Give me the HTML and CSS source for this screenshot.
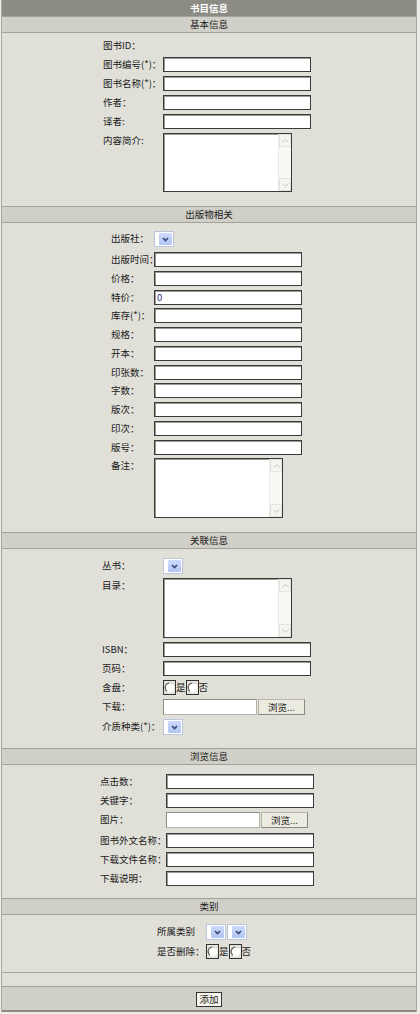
FILE: index.html
```html
<!DOCTYPE html>
<html lang="zh-CN">
<head>
    <meta charset="UTF-8">
    <title>书目信息</title>
    <link rel="stylesheet" href="styles.css">
</head>
<body>
    <div class="page">
        <div class="caption">书目信息</div>

        <!-- 基本信息 -->
        <div class="section-title">基本信息</div>
        <div class="section-body basic-body">
            <div class="form-grid basic">
                <span class="label">图书ID：</span><span></span>
                <span class="label">图书编号(*)：</span><input class="text" type="text">
                <span class="label">图书名称(*)：</span><input class="text" type="text">
                <span class="label">作者：</span><input class="text" type="text">
                <span class="label">译者:</span><input class="text" type="text">
                <span class="label">内容简介:</span>
                <div class="memo memo-short">
                    <textarea></textarea>
                    <div class="vscroll">
                        <span class="arrow"><svg width="7" height="4" viewBox="0 0 7 4"><path d="M0.5 3.5 L3.5 0.5 L6.5 3.5" fill="none" stroke="#c4c4c0" stroke-width="1"/></svg></span>
                        <span class="arrow"><svg width="7" height="4" viewBox="0 0 7 4"><path d="M0.5 0.5 L3.5 3.5 L6.5 0.5" fill="none" stroke="#c4c4c0" stroke-width="1"/></svg></span>
                    </div>
                </div>
            </div>
        </div>

        <!-- 出版物相关 -->
        <div class="section-title">出版物相关</div>
        <div class="section-body publish-body">
            <div class="form-grid publish">
                <span class="label">出版社：</span>
                <span class="cell-combo"><span class="combo"><span class="combo-btn"><svg width="7" height="5" viewBox="0 0 7 5"><path d="M1 1 L3.5 3.5 L6 1" fill="none" stroke="#34467a" stroke-width="1.6"/></svg></span></span></span>
                <span class="label">出版时间：</span><input class="text" type="text">
                <span class="label">价格：</span><input class="text" type="text">
                <span class="label">特价：</span><input class="text" type="text" value="0">
                <span class="label">库存(*)：</span><input class="text" type="text">
                <span class="label">规格：</span><input class="text" type="text">
                <span class="label">开本：</span><input class="text" type="text">
                <span class="label">印张数：</span><input class="text" type="text">
                <span class="label">字数：</span><input class="text" type="text">
                <span class="label">版次：</span><input class="text" type="text">
                <span class="label">印次：</span><input class="text" type="text">
                <span class="label">版号：</span><input class="text" type="text">
                <span class="label">备注：</span>
                <div class="memo">
                    <textarea></textarea>
                    <div class="vscroll">
                        <span class="arrow"><svg width="7" height="4" viewBox="0 0 7 4"><path d="M0.5 3.5 L3.5 0.5 L6.5 3.5" fill="none" stroke="#c4c4c0" stroke-width="1"/></svg></span>
                        <span class="arrow"><svg width="7" height="4" viewBox="0 0 7 4"><path d="M0.5 0.5 L3.5 3.5 L6.5 0.5" fill="none" stroke="#c4c4c0" stroke-width="1"/></svg></span>
                    </div>
                </div>
            </div>
        </div>

        <!-- 关联信息 -->
        <div class="section-title">关联信息</div>
        <div class="section-body related-body">
            <div class="form-grid related">
                <span class="label">丛书：</span>
                <span class="combo"><span class="combo-btn"><svg width="7" height="5" viewBox="0 0 7 5"><path d="M1 1 L3.5 3.5 L6 1" fill="none" stroke="#34467a" stroke-width="1.6"/></svg></span></span>
                <span class="label">目录：</span>
                <div class="memo">
                    <textarea></textarea>
                    <div class="vscroll">
                        <span class="arrow"><svg width="7" height="4" viewBox="0 0 7 4"><path d="M0.5 3.5 L3.5 0.5 L6.5 3.5" fill="none" stroke="#c4c4c0" stroke-width="1"/></svg></span>
                        <span class="arrow"><svg width="7" height="4" viewBox="0 0 7 4"><path d="M0.5 0.5 L3.5 3.5 L6.5 0.5" fill="none" stroke="#c4c4c0" stroke-width="1"/></svg></span>
                    </div>
                </div>
                <span class="label">ISBN：</span><input class="text" type="text">
                <span class="label">页码：</span><input class="text" type="text">
                <span class="label">含盘：</span>
                <span class="choices"><input class="radio" type="radio" name="disc"><span>是</span><input class="radio" type="radio" name="disc"><span>否</span></span>
                <span class="label">下载：</span>
                <span class="file"><input class="file-path" type="text"><button class="file-btn" type="button">浏览...</button></span>
                <span class="label">介质种类(*)：</span>
                <span class="combo"><span class="combo-btn"><svg width="7" height="5" viewBox="0 0 7 5"><path d="M1 1 L3.5 3.5 L6 1" fill="none" stroke="#34467a" stroke-width="1.6"/></svg></span></span>
            </div>
        </div>

        <!-- 浏览信息 -->
        <div class="section-title">浏览信息</div>
        <div class="section-body browse-body">
            <div class="form-grid browse">
                <span class="label">点击数：</span><input class="text" type="text">
                <span class="label">关键字：</span><input class="text" type="text">
                <span class="label">图片：</span>
                <span class="file file-row"><input class="file-path" type="text"><button class="file-btn" type="button">浏览...</button></span>
                <span class="label">图书外文名称：</span><input class="text" type="text">
                <span class="label">下载文件名称：</span><input class="text" type="text">
                <span class="label">下载说明：</span><input class="text" type="text">
            </div>
        </div>

        <!-- 类别 -->
        <div class="section-title">类别</div>
        <div class="section-body kind-body">
            <div class="form-grid kind">
                <span class="label">所属类别</span>
                <span class="combos">
                    <span class="combo"><span class="combo-btn"><svg width="7" height="5" viewBox="0 0 7 5"><path d="M1 1 L3.5 3.5 L6 1" fill="none" stroke="#34467a" stroke-width="1.6"/></svg></span></span>
                    <span class="combo"><span class="combo-btn"><svg width="7" height="5" viewBox="0 0 7 5"><path d="M1 1 L3.5 3.5 L6 1" fill="none" stroke="#34467a" stroke-width="1.6"/></svg></span></span>
                </span>
                <span class="label">是否删除：</span>
                <span class="choices"><input class="radio" type="radio" name="del"><span>是</span><input class="radio" type="radio" name="del"><span>否</span></span>
            </div>
        </div>

        <div class="spacer"></div>
        <div class="actions">
            <button class="submit" type="button">添加</button>
        </div>
    </div>
</body>
</html>
```

FILE: styles.css
```css
/* Page */
body {
    margin: 0;
    background: #ecebe5;
    font-family: "Noto Sans CJK SC", "Liberation Sans", sans-serif;
    font-size: 9.5px;
    color: #1a1a1a;
}

.page {
    width: 414px;
    margin-left: 1px;
    border-left: 1px solid #aaa9a2;
    border-right: 1px solid #aaa9a2;
    background: #e0dfd8;
}

.caption {
    height: 16px;
    line-height: 16px;
    background: #8c8b84;
    color: #fff;
    font-weight: bold;
    text-align: center;
}

.section-title {
    height: 15px;
    line-height: 15px;
    background: #d1d0c8;
    border-top: 1px solid #a2a19a;
    border-bottom: 1px solid #a2a19a;
    text-align: center;
}

/* Section bodies */
.basic-body { padding: 5px 0 14px; }
.publish-body { padding: 8px 0 13.75px; }
.related-body { padding: 9px 0 13px; }
.browse-body { padding: 9px 0 12px; }
.kind-body { padding: 9px 0 13px; }

.form-grid {
    display: grid;
    justify-content: center;
    align-items: start;
    row-gap: 4px;
    grid-auto-rows: minmax(15px, auto);
}

.basic { grid-template-columns: 60px 152px; }
.publish { grid-template-columns: 43px 153px; row-gap: 3.75px; }
.related { grid-template-columns: 61px 153px; }
.browse { grid-template-columns: 66px 152px; }
.kind { grid-template-columns: 49px 55px; }

.label {
    line-height: 15px;
    white-space: nowrap;
}

.cell-combo {
    height: 17.25px;
}

/* Text inputs */
.text {
    display: block;
    width: 148px;
    height: 15px;
    box-sizing: border-box;
    margin: 0;
    padding: 0 2px;
    border: 1px solid #3a3a3a;
    box-shadow: inset 1px 1px 0 #9a9a96;
    background: #fff;
    font: inherit;
    color: #2a2a80;
}

/* Textarea with classic scrollbar */
.memo {
    display: flex;
    width: 129px;
    height: 60px;
    box-sizing: border-box;
    border: 1px solid #3a3a3a;
    box-shadow: inset 1px 1px 0 #9a9a96;
    background: #fff;
}

.memo-short {
    height: 59px;
}

.memo textarea {
    flex: 1;
    border: none;
    margin: 0;
    padding: 0;
    resize: none;
    background: transparent;
    outline: none;
}

.vscroll {
    width: 12px;
    display: flex;
    flex-direction: column;
    justify-content: space-between;
    background: #f8f8f5;
    border-left: 1px solid #ebebe6;
}

.arrow {
    height: 11px;
    display: flex;
    align-items: center;
    justify-content: center;
    background: #f4f4f0;
    border: 1px solid #e4e4de;
}

/* Dropdowns */
.combo {
    display: flex;
    width: 20px;
    height: 16px;
    box-sizing: border-box;
    padding: 1px 1px 1px 4px;
    border: 1px solid #b9c6dd;
    background: #fff;
}

.combo-btn {
    flex: 1;
    display: flex;
    align-items: center;
    justify-content: center;
    background: linear-gradient(#ccdafc, #b2c5f2);
    border-radius: 1px;
}

.combos {
    display: flex;
    gap: 1px;
}

/* Radios: old-style square frame with a "C" shaped ring */
.choices {
    display: flex;
    align-items: center;
    height: 15px;
    line-height: 15px;
}

.radio {
    appearance: none;
    width: 13px;
    height: 15px;
    box-sizing: border-box;
    margin: 0;
    border: 1px solid #333;
    background:
        radial-gradient(circle at 50% 50%, #fff 0 3.4px, transparent 3.9px),
        radial-gradient(circle at 50% 50%, transparent 0 4.8px, #e4e3dc 5.3px),
        conic-gradient(#d6d6d2 0deg 40deg, #fbfbf8 40deg 215deg, #6e6e6a 215deg 360deg);
}

/* File inputs */
.file {
    display: flex;
    gap: 1px;
    height: 16px;
}

.file-row {
    height: 17px;
}

.file-path {
    width: 94px;
    height: 16px;
    box-sizing: border-box;
    margin: 0;
    border: 1px solid #b4b3ac;
    border-top-color: #8c8b85;
    border-left-color: #8c8b85;
    background: #fff;
}

.file-btn {
    width: 47px;
    height: 16px;
    margin: 0;
    padding: 0;
    border: 1px solid #b8b6a8;
    border-right-color: #8a8980;
    border-bottom-color: #8a8980;
    background: #ecebdf;
    font: inherit;
    color: #222;
    line-height: 14px;
}

/* Footer rows */
.spacer {
    height: 13px;
    border-top: 1px solid #a8a7a0;
}

.actions {
    padding: 5px 0 3px;
    background: #d1d0c8;
    border-top: 1px solid #a2a19a;
    border-bottom: 2px solid #8c8b84;
    text-align: center;
}

.submit {
    display: inline-block;
    height: 15px;
    width: 26px;
    margin: 0;
    padding: 0;
    border: 1px solid #333;
    background: #f6f5ee;
    font: inherit;
    color: #222;
    line-height: 13px;
    vertical-align: top;
}
```
